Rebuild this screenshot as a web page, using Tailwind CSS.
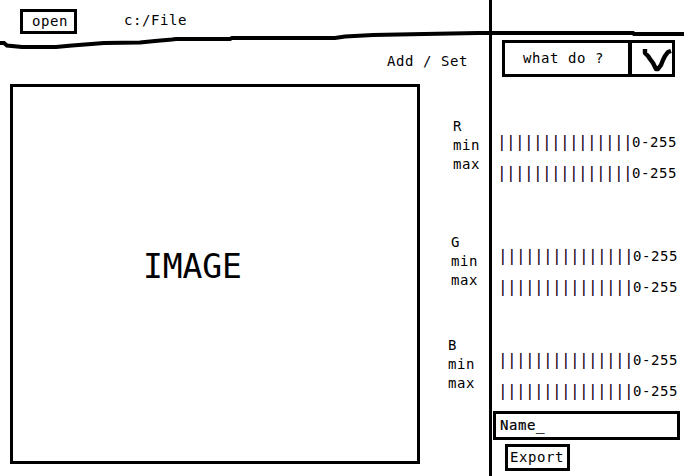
<!DOCTYPE html>
<html lang="en">
<head>
<meta charset="utf-8">
<title>Image channel editor</title>
<script src="https://cdn.jsdelivr.net/npm/@tailwindcss/browser@4"></script>
</head>
<body class="bg-white">
<div class="relative flex h-[476px] w-[684px] overflow-hidden bg-white font-['DejaVu_Sans_Mono',monospace] text-[14px] leading-[19px] tracking-[0.56px] text-black">
  <main class="flex w-[489px] flex-col">
    <header class="flex h-[52px] items-start pt-[9px] pl-5">
      <button class="flex h-[25px] w-[57px] items-center border-3 border-black pl-[9px]">open</button>
      <span class="ml-[47px] pt-[2px]">c:/File</span>
    </header>
    <div class="flex h-8 justify-end pr-[21px]">Add / Set</div>
    <div class="flex">
      <section class="ml-[10px] flex h-[380px] w-[410px] border-3 border-black pt-[160px] pl-[130px] text-[33px] leading-[40px] tracking-[-0.1px]">IMAGE</section>
      <div class="flex flex-1 flex-col pt-[33px]">
        <div class="h-[116px] pl-[33px]"><p>R</p><p>min</p><p>max</p></div>
        <div class="h-[103px] pl-[31px]"><p>G</p><p>min</p><p>max</p></div>
        <div class="pl-[28px]"><p>B</p><p>min</p><p>max</p></div>
      </div>
    </div>
  </main>
  <aside class="flex w-[195px] flex-col border-l-3 border-black pt-10">
    <div class="ml-[10px] flex h-[37px] w-[173px] border-3 border-black">
      <span class="w-[123px] pt-[6px] pl-[18px]">what do ?</span>
      <span class="w-1 bg-black"></span>
      <svg class="h-[31px] w-10" viewBox="632 43 40 31" fill="none" stroke="#000" stroke-width="4.4" stroke-linejoin="round"><path d="M645 49V53L648 56L650 59L653 63L656 69H658L661 65L663 60L665 56L668 52L671 51"/></svg>
    </div>
    <div class="mt-[50px] h-[114px] pl-[6px]">
      <div class="flex h-[31px] items-center"><span class="-ml-px w-[135px] pb-[2px] text-[16px] tracking-[-0.63px] text-[#180018]">|||||||||||||||</span><span>0-255</span></div>
      <div class="flex h-[31px] items-center"><span class="-ml-px w-[135px] pb-[2px] text-[16px] tracking-[-0.63px] text-[#180018]">|||||||||||||||</span><span>0-255</span></div>
    </div>
    <div class="h-[104px] pl-[7px]">
      <div class="flex h-[31px] items-center"><span class="-ml-px w-[135px] pb-[2px] text-[16px] tracking-[-0.63px] text-[#180018]">|||||||||||||||</span><span>0-255</span></div>
      <div class="flex h-[31px] items-center"><span class="-ml-px w-[135px] pb-[2px] text-[16px] tracking-[-0.63px] text-[#180018]">|||||||||||||||</span><span>0-255</span></div>
    </div>
    <div class="h-[66px] pl-[7px]">
      <div class="flex h-[31px] items-center"><span class="-ml-px w-[135px] pb-[2px] text-[16px] tracking-[-0.63px] text-[#180018]">|||||||||||||||</span><span>0-255</span></div>
      <div class="flex h-[31px] items-center"><span class="-ml-px w-[135px] pb-[2px] text-[16px] tracking-[-0.63px] text-[#180018]">|||||||||||||||</span><span>0-255</span></div>
    </div>
    <div class="ml-px flex h-[29px] w-[187px] items-center border-3 border-black pl-1 [-webkit-text-stroke:0.2px_black]">Name_</div>
    <button class="mt-1 ml-[13px] flex h-[27px] w-[65px] items-center border-3 border-black pl-[2px]">Export</button>
  </aside>
  <!-- freehand rule crossing both panes -->
  <svg class="absolute top-0 left-0 h-[60px] w-[684px]" viewBox="0 0 684 60" fill="none" stroke="#000" stroke-width="4"><path d="M0 43H4L7 45.5L22 47H56L72 45.5L85 44.5L104 43L140 42.5L155 41L172 39.5L176 39H230L232 38H335L345 36.5L373 35L424 34L478 33L486 33H633L634 34H684"/></svg>
</div>
</body>
</html>
